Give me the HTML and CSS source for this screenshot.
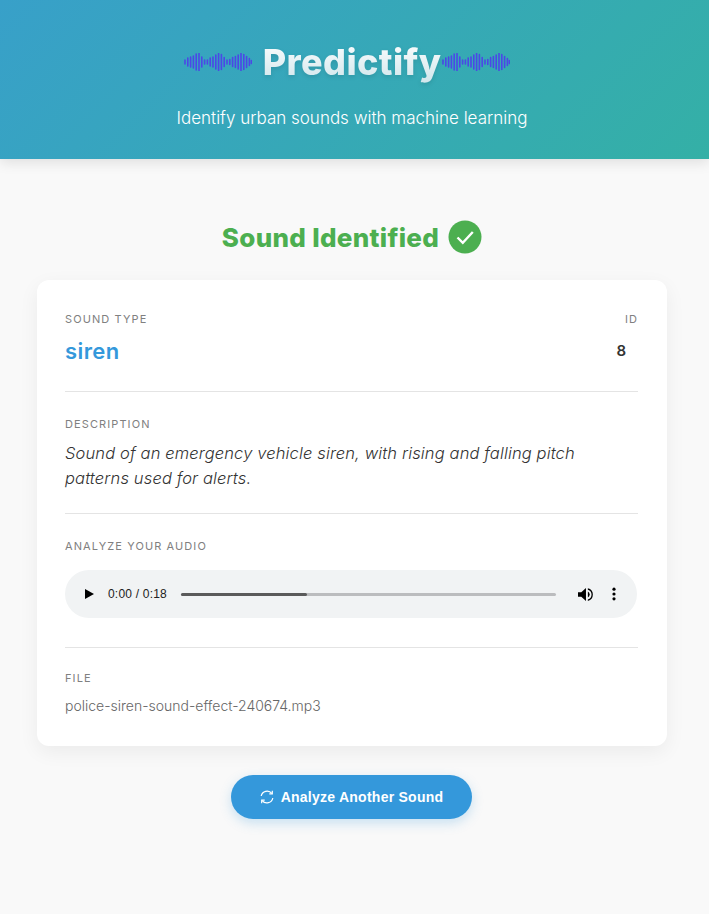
FILE: index.html
```html
<!DOCTYPE html>
<html lang="en">
<head>
  <meta charset="UTF-8" />
  <meta name="viewport" content="width=device-width, initial-scale=1.0" />
  <title>Predictify</title>
  <link rel="stylesheet" href="styles.css">
</head>
<body>
  <svg class="defs" width="0" height="0" aria-hidden="true">
    <symbol id="wave" viewBox="0 0 68 18">
      <path d="M1 7V11M3.8 5V13M6.6 4V14M9.4 3V15M12.2 1V17M15 .5V17.5M17.8 4V14M20.6 7V11M23.4 7V11M26.2 5V13M29 4V14M31.8 2V16M34.6 .5V17.5M37.4 1.5V16.5M40.2 4.5V13.5M43 7V11M45.8 6.5V11.5M48.6 4.500V13.500M51.400 3.500V14.500M54.200 2V16M57 .5V17.5M59.800 1.500V16.500M62.600 3.500V14.500M65.400 5.500V12.500M67.400 7.500V10.500" />
    </symbol>
  </svg>

  <!-- Header -->
  <header class="header">
    <div class="brand">
      <svg class="wave" width="68" height="18"><use href="#wave"></use></svg>
      <h1 class="brand-name">Predictify</h1>
      <svg class="wave" width="68" height="18"><use href="#wave"></use></svg>
    </div>
    <p class="tagline">Identify urban sounds with machine learning</p>
  </header>

  <main class="main">
    <h2 class="result-title">
      Sound Identified
      <svg class="check" width="34" height="34" viewBox="0 0 34 34">
        <circle cx="17" cy="17" r="16.500" fill="#4caf50" />
        <path d="M9.500 17.500L14.800 22.800L24.800 12" fill="none" stroke="#fff" stroke-width="2.400" />
      </svg>
    </h2>

    <section class="card">
      <div class="row row-type">
        <div>
          <div class="label">Sound Type</div>
          <div class="sound-name">siren</div>
        </div>
        <div class="id-block">
          <div class="label">ID</div>
          <div class="id-value">8</div>
        </div>
      </div>

      <div class="row row-desc">
        <div class="label">Description</div>
        <p class="desc">Sound of an emergency vehicle siren, with rising and falling pitch patterns used for alerts.</p>
      </div>

      <div class="row row-audio">
        <div class="label">Analyze Your Audio</div>
        <div class="player">
          <svg class="play" width="9" height="10" viewBox="0 0 9 10"><path d="M0 0L9 5L0 10Z" /></svg>
          <span class="time">0:00 / 0:18</span>
          <div class="track"><div class="track-fill" style="width: 33.600%"></div></div>
          <svg class="volume" width="15" height="15" viewBox="0 0 16 16">
            <path d="M0 5.500H3.500L8.500 1V15L3.500 10.500H0Z" />
            <path d="M10.500 4.800A3.600 3.600 0 0 1 10.500 11.200Z" />
            <path d="M10.500 1.200A7 7 0 0 1 10.500 14.800V13.200A5.400 5.400 0 0 0 10.500 2.800Z" />
          </svg>
          <svg class="more" width="4" height="14" viewBox="0 0 4 14">
            <circle cx="2" cy="2.200" r="1.600" /><circle cx="2" cy="7" r="1.600" /><circle cx="2" cy="11.800" r="1.600" />
          </svg>
        </div>
      </div>

      <div class="row row-file">
        <div class="label">File</div>
        <div class="file-name">police-siren-sound-effect-240674.mp3</div>
      </div>
    </section>

    <a class="btn" href="#">
      <svg width="14" height="14" viewBox="0 0 14 14" fill="none" stroke="#fff" stroke-width="1.200">
        <path d="M1.200 6A6 6 0 0 1 11.800 3.400" />
        <path d="M12.300 .8V3.800H9.300" />
        <path d="M12.800 8A6 6 0 0 1 2.200 10.600" />
        <path d="M1.700 13.200V10.200H4.700" />
      </svg>
      Analyze Another Sound
    </a>
  </main>
</body>
</html>
```

FILE: styles.css
```css
* { box-sizing: border-box; }

body {
  font-family: 'Inter', 'Liberation Sans', sans-serif;
  background: #f9f9f9;
  color: #333;
  margin: 0;
  min-height: 100vh;
}

.defs { display: block; height: 0; }

.header {
  height: 159px;
  padding: 38px 5px 0 0;
  background: linear-gradient(135deg, #38a0c9, #34b0a6);
  box-shadow: 0 4px 12px rgba(0, 0, 0, 0.1);
  text-align: center;
}
.brand {
  display: flex;
  align-items: center;
  justify-content: center;
  height: 48px;
  padding-right: 10px;
}
.brand-name {
  margin: 0 1px 0 11px;
  font-size: 36px;
  font-weight: 800;
  line-height: 48px;
  letter-spacing: 0.4px;
  background: linear-gradient(180deg, #fff, #cde4ea);
  -webkit-background-clip: text;
  background-clip: text;
  color: transparent;
  filter: drop-shadow(0 2px 2px rgba(0, 0, 0, 0.1));
}
.wave { fill: none; stroke: #4b48e6; stroke-width: 1.600; stroke-linecap: round; }
.tagline {
  margin: 20px 0 0;
  font-size: 17px;
  font-weight: 300;
  line-height: 24px;
  color: #fff;
}

.main {
  display: flex;
  flex-direction: column;
  align-items: center;
  padding: 61px 42px 0 37px;
}
.result-title {
  display: flex;
  align-items: center;
  gap: 9px;
  margin: 0 0 26px;
  height: 34px;
  font-size: 26px;
  font-weight: 800;
  letter-spacing: 0.3px;
  color: #4caf50;
  white-space: nowrap;
}

.card {
  width: 100%;
  height: 466px;
  background: #fff;
  border-radius: 12px;
  padding: 0 29px 0 28px;
  box-shadow: 0 6px 20px rgba(0, 0, 0, 0.06);
}
.row { border-bottom: 1px solid #e4e4e4; }
.row-type {
  display: flex;
  justify-content: space-between;
  height: 112px;
  padding-top: 32px;
}
.row-desc { height: 122px; padding-top: 25px; }
.row-audio { height: 134px; padding-top: 25px; }
.row-file { border-bottom: none; padding-top: 23px; }

.label {
  font-size: 11px;
  line-height: 14px;
  letter-spacing: 1.1px;
  text-transform: uppercase;
  color: #808080;
}
.sound-name {
  margin-top: 11px;
  font-size: 22px;
  font-weight: 600;
  line-height: 28px;
  letter-spacing: 0.4px;
  color: #3498db;
}
.id-block { text-align: right; }
.id-value {
  margin-top: 11px;
  padding-right: 12px;
  font-size: 15px;
  font-weight: 600;
  line-height: 28px;
  color: #333;
}
.desc {
  margin: 10px 0 0;
  font-size: 16.500px;
  font-style: italic;
  font-weight: 300;
  line-height: 25px;
  letter-spacing: 0.14px;
  color: #333;
}

.player {
  display: flex;
  align-items: center;
  width: 572px;
  height: 48px;
  margin-top: 17px;
  padding: 0 21px 0 20px;
  border-radius: 24px;
  background: #f1f3f4;
  color: #000;
}
.play { flex: none; }
.time {
  margin-left: 14px;
  font-family: 'Liberation Sans', sans-serif;
  font-size: 12px;
  letter-spacing: 0.2px;
  color: #222;
  white-space: nowrap;
}
.track {
  flex: 1;
  height: 3px;
  margin: 0 22px 0 14px;
  border-radius: 2px;
  background: #bbbcbe;
}
.track-fill { height: 100%; border-radius: 2px; background: #5a5a5a; }
.volume { flex: none; }
.more { flex: none; margin-left: 19px; }

.file-name {
  margin-top: 11px;
  font-size: 14px;
  font-weight: 300;
  line-height: 20px;
  color: #666;
}

.btn {
  display: flex;
  align-items: center;
  justify-content: center;
  gap: 7px;
  width: 241px;
  height: 44px;
  margin: 29px 1px 0 0;
  border-radius: 22px;
  background: #3498db;
  box-shadow: 0 4px 12px rgba(52, 152, 219, 0.25);
  font-family: 'Liberation Sans', sans-serif;
  font-size: 14px;
  font-weight: 700;
  letter-spacing: 0.25px;
  color: #fff;
  text-decoration: none;
}
```
